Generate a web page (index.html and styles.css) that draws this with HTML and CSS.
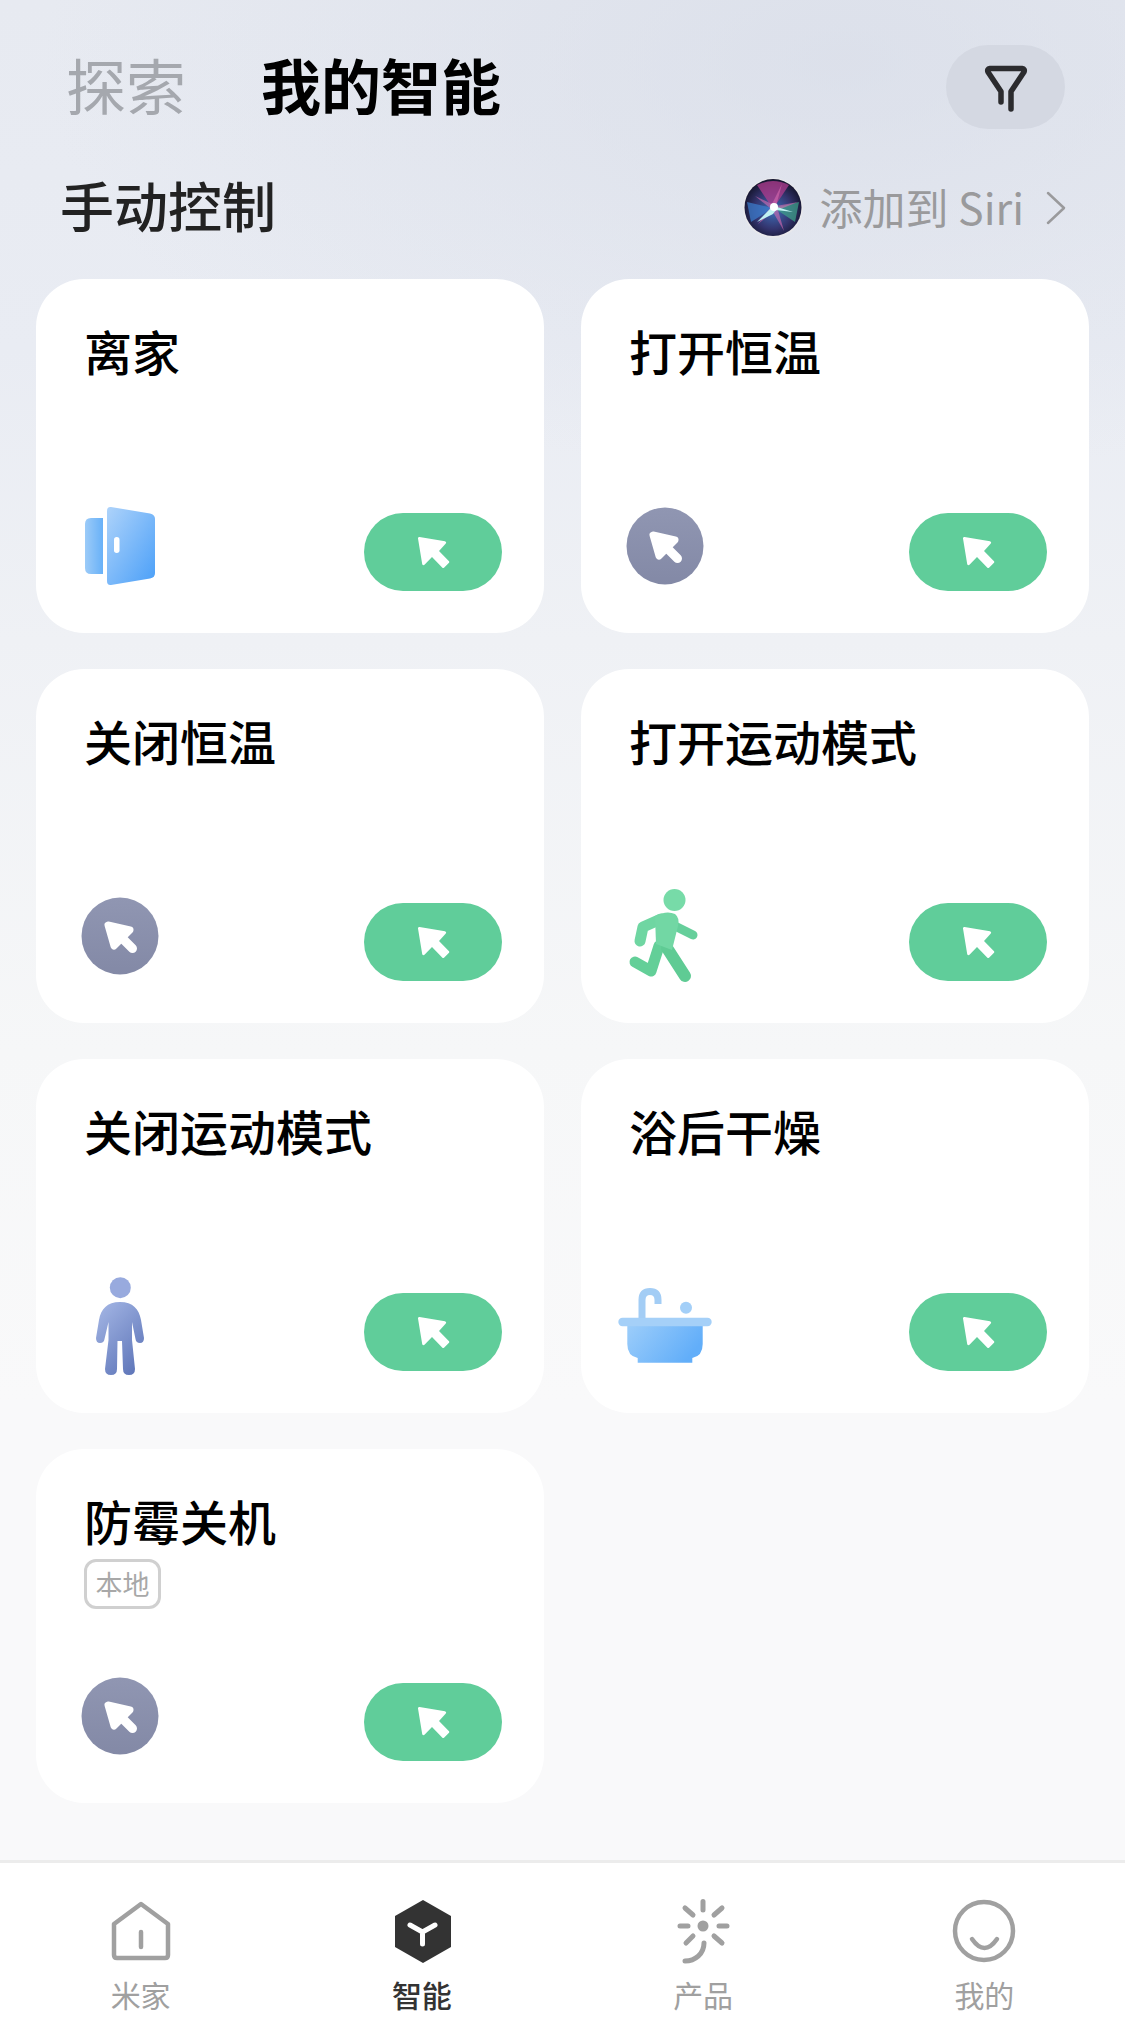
FILE: index.html
```html
<!DOCTYPE html>
<html lang="zh-CN">
<head>
    <meta charset="UTF-8">
    <meta name="viewport" content="width=device-width, initial-scale=1.0">
    <title>我的智能</title>
    <link rel="stylesheet" href="styles.css">
</head>
<body>
    <svg class="defs" width="0" height="0">
        <defs>
            <linearGradient id="blue" x1="0" y1="0" x2="1" y2="1">
                <stop offset="0" stop-color="#aed3fa"/>
                <stop offset="1" stop-color="#4a9ff8"/>
            </linearGradient>
            <linearGradient id="blueSide" x1="0" y1="0" x2="1" y2="0">
                <stop offset="0" stop-color="#9ccbf8"/>
                <stop offset="1" stop-color="#68b1f8"/>
            </linearGradient>
            <linearGradient id="tub" x1="0" y1="0" x2="1" y2="0.4">
                <stop offset="0" stop-color="#9ccdfa"/>
                <stop offset="1" stop-color="#62aef9"/>
            </linearGradient>
            <linearGradient id="man" x1="0" y1="0" x2="0.7" y2="1">
                <stop offset="0" stop-color="#a6b8e6"/>
                <stop offset="1" stop-color="#6279bb"/>
            </linearGradient>
            <linearGradient id="grey" x1="0" y1="0" x2="0" y2="1">
                <stop offset="0" stop-color="#9096b2"/>
                <stop offset="1" stop-color="#8389a6"/>
            </linearGradient>
            <radialGradient id="siriBg" cx="0.5" cy="0.55" r="0.55">
                <stop offset="0" stop-color="#3d6fb8"/>
                <stop offset="0.6" stop-color="#33346e"/>
                <stop offset="1" stop-color="#14142c"/>
            </radialGradient>
            <symbol id="cursor" viewBox="0 0 34 34">
                <path d="M2 3.500Q1.800 1.700 3.500 2L29 6.300Q31 7 29.800 8.400L23 16L33 26.300Q33.700 27 33 27.800L28 32.700Q27.200 33.400 26.400 32.700L16 22L8.500 29.800Q6.800 31 6.200 29Z" fill="#fff"/>
            </symbol>
            <symbol id="manual" viewBox="0 0 100 100">
                <circle cx="50" cy="50" r="38.500" fill="url(#grey)"/>
                <path d="M38 39L60 44L44 60Z" fill="#fff" stroke="#fff" stroke-width="7" stroke-linejoin="round"/>
                <path d="M50 50L62.500 62.500" stroke="#fff" stroke-width="9" stroke-linecap="round"/>
            </symbol>
        </defs>
    </svg>

    <div class="main">
        <div class="top">
            <div class="tabs">
                <span class="tab">探索</span>
                <span class="tab active">我的智能</span>
            </div>
            <div class="filter">
                <svg width="50" height="50" viewBox="0 0 50 50" fill="none" stroke="#2b2b2e" stroke-width="5.500" stroke-linecap="round" stroke-linejoin="round">
                    <path d="M20 40V29.500L7 10Q5.800 7 9 6.500H41Q44.200 7 43 10L30 29.500V47"/>
                </svg>
            </div>
        </div>

        <div class="section">
            <h2>手动控制</h2>
            <div class="siri">
                <svg width="60" height="60" viewBox="0 0 60 60">
                    <circle cx="30" cy="30" r="30" fill="#e9e9ec"/>
                    <circle cx="30" cy="29.500" r="28.500" fill="url(#siriBg)"/>
                    <path d="M30 31L14 7Q30 -1 46 7Z" fill="#b03c8e" opacity=".75"/>
                    <path d="M31 30L56 24L52 44Z" fill="#3fa58a" opacity=".7"/>
                    <path d="M30 30L4 24L8 44Z" fill="#3c7fd0" opacity=".7"/>
                    <path d="M29 26L39 6L33 28L55 24L35 32L41 53L30 34L15 46L27 30L12 18Z" fill="#d76bb0" opacity=".6"/>
                    <path d="M30 25L34 29L50 34L33 32L30 36L14 44L27 31Z" fill="#bff2f2"/>
                    <circle cx="31" cy="29" r="4" fill="#fff"/>
                </svg>
                <span>添加到 Siri</span>
                <svg class="chevron" width="22" height="34" viewBox="0 0 22 34" fill="none" stroke="#9a9a9c" stroke-width="2.500" stroke-linecap="round" stroke-linejoin="round">
                    <path d="M3 2L19 17L3 32"/>
                </svg>
            </div>
        </div>

        <div class="cards">
            <div class="card">
                <div class="card-title">离家</div>
                <div class="card-bottom">
                    <svg class="scene" viewBox="0 0 100 100">
                        <path d="M33 22V78H21Q15 78 15 72V28Q15 22 21 22Z" fill="url(#blueSide)"/>
                        <path d="M37 15Q37 10.500 41 11L80 17.500Q85 18.500 85 23V77Q85 81.500 80 82.500L41 89Q37 89.500 37 85Z" fill="url(#blue)"/>
                        <rect x="44" y="41" width="5.500" height="16" rx="2.700" fill="#fff"/>
                    </svg>
                    <button class="run"><svg width="34" height="34"><use href="#cursor"/></svg></button>
                </div>
            </div>
            <div class="card">
                <div class="card-title">打开恒温</div>
                <div class="card-bottom">
                    <svg class="scene" viewBox="0 0 100 100"><use href="#manual"/></svg>
                    <button class="run"><svg width="34" height="34"><use href="#cursor"/></svg></button>
                </div>
            </div>
            <div class="card">
                <div class="card-title">关闭恒温</div>
                <div class="card-bottom">
                    <svg class="scene" viewBox="0 0 100 100"><use href="#manual"/></svg>
                    <button class="run"><svg width="34" height="34"><use href="#cursor"/></svg></button>
                </div>
            </div>
            <div class="card">
                <div class="card-title">打开运动模式</div>
                <div class="card-bottom">
                    <svg class="scene" viewBox="0 0 100 100" fill="none" stroke-linecap="round" stroke-linejoin="round">
                        <circle cx="59.500" cy="14" r="11" fill="#77dba8"/>
                        <path d="M60 40L78 49" stroke="#66cf9b" stroke-width="9"/>
                        <path d="M44 60L36 85L20 76" stroke="#63cf98" stroke-width="11"/>
                        <path d="M52 62L70 90" stroke="#5fcb94" stroke-width="12"/>
                        <path d="M46 33L28 41L25 55" stroke="#6fd6a2" stroke-width="11"/>
                        <path d="M40 30Q52 24 60 28Q65 32 63 40L57 64L41 58Z" fill="#72d7a4"/>
                    </svg>
                    <button class="run"><svg width="34" height="34"><use href="#cursor"/></svg></button>
                </div>
            </div>
            <div class="card">
                <div class="card-title">关闭运动模式</div>
                <div class="card-bottom">
                    <svg class="scene" viewBox="0 0 100 100" fill="url(#man)">
                        <circle cx="50.300" cy="11.700" r="10.500" fill="#98aade"/>
                        <path d="M50 26C63 26 69 33 71 44L74 62Q74 67 70 67Q66 67 65.500 63L62 46V64L65 93Q65 99 59 99Q53 99 53 93L52 65H47.500L47 93Q47 99 41 99Q35 99 35 93L38.500 64V46L34.500 63Q34 67 30 67Q26 67 26 62L29 44C31 33 37 26 50 26Z"/>
                    </svg>
                    <button class="run"><svg width="34" height="34"><use href="#cursor"/></svg></button>
                </div>
            </div>
            <div class="card">
                <div class="card-title">浴后干燥</div>
                <div class="card-bottom">
                    <svg class="scene" viewBox="0 0 100 100" fill="none">
                        <path d="M27 42V24Q27 15.500 35 15.500Q43 15.500 43 24V28" stroke="#a3cdf5" stroke-width="7"/>
                        <circle cx="71" cy="31.700" r="6" fill="#a3cff8"/>
                        <path d="M12.300 50H87.700V68Q87.700 80 77.300 82V86.700H22.700V82Q12.300 80 12.300 68Z" fill="url(#tub)"/>
                        <rect x="3.300" y="41.700" width="93.400" height="8.500" rx="4.200" fill="#a5d0f8"/>
                    </svg>
                    <button class="run"><svg width="34" height="34"><use href="#cursor"/></svg></button>
                </div>
            </div>
            <div class="card">
                <div>
                    <div class="card-title">防霉关机</div>
                    <span class="tag">本地</span>
                </div>
                <div class="card-bottom">
                    <svg class="scene" viewBox="0 0 100 100"><use href="#manual"/></svg>
                    <button class="run"><svg width="34" height="34"><use href="#cursor"/></svg></button>
                </div>
            </div>
        </div>
    </div>

    <div class="tabbar">
        <div class="item">
            <svg width="66" height="66" viewBox="0 0 66 66" fill="none" stroke="#a0a0a0" stroke-width="4.500" stroke-linecap="round" stroke-linejoin="round">
                <path d="M33 6L60 26V57Q60 60 57 60H9Q6 60 6 57V26Z"/>
                <path d="M33 34V49"/>
            </svg>
            <span>米家</span>
        </div>
        <div class="item active">
            <svg width="66" height="66" viewBox="0 0 66 66" fill="none">
                <path d="M34 2L62 18V49L34 65L6 49V18Z" fill="#333"/>
                <path d="M21 27L33.500 34L46 27M33.500 34V46" stroke="#fff" stroke-width="5" stroke-linecap="round" stroke-linejoin="round"/>
            </svg>
            <span>智能</span>
        </div>
        <div class="item">
            <svg width="66" height="66" viewBox="0 0 66 66" fill="none" stroke="#a0a0a0" stroke-width="5" stroke-linecap="round">
                <circle cx="33" cy="28" r="5.500" fill="#a0a0a0" stroke="none"/>
                <path d="M33 3.500V12M10 28H18M49 28H57M15 10L23 17M44 17L52 10M16 45L23 38M44 38L52 45"/>
                <path d="M34 45C34 56 25 63 15 63"/>
            </svg>
            <span>产品</span>
        </div>
        <div class="item">
            <svg width="66" height="66" viewBox="0 0 66 66" fill="none" stroke="#a0a0a0" stroke-width="4.500" stroke-linecap="round">
                <circle cx="33" cy="33" r="29"/>
                <path d="M21 41Q33.500 59 46 41"/>
            </svg>
            <span>我的</span>
        </div>
    </div>
</body>
</html>
```

FILE: styles.css
```css
* {
    box-sizing: border-box;
}
html, body {
    margin: 0;
    padding: 0;
}
body {
    display: flex;
    flex-direction: column;
    width: 1125px;
    height: 2031px;
    overflow: hidden;
    background-color: #f9f9fa;
    font-family: "Noto Sans CJK SC", "Noto Sans", sans-serif;
}
.defs {
    display: block;
    width: 0;
    height: 0;
}

.main {
    flex: 1;
    background:
        radial-gradient(ellipse 800px 420px at 75% 60px, rgba(214, 219, 231, .65), rgba(214, 219, 231, 0)),
        linear-gradient(180deg, #e7eaf1 0, #e9ecf3 350px, #eff1f5 640px, #f6f7f8 1050px, #f9f9fa 1400px);
}

.top {
    display: flex;
    justify-content: space-between;
    align-items: center;
    height: 84px;
    margin-top: 45px;
    padding: 0 60px 0 66px;
}
.tabs {
    display: flex;
    align-items: center;
    gap: 75px;
    margin-bottom: 7px;
}
.tab {
    font-size: 60px;
    line-height: 84px;
    color: #a5a8ae;
}
.tab.active {
    font-weight: 700;
    color: #000;
}
.filter {
    display: flex;
    justify-content: center;
    align-items: center;
    width: 119px;
    height: 84px;
    border-radius: 42px;
    background-color: #d4d8e2;
}

.section {
    display: flex;
    justify-content: space-between;
    align-items: center;
    height: 60px;
    margin-top: 49px;
    padding: 0 58px 0 60px;
}
.section h2 {
    margin: 0 0 7px;
    font-size: 54px;
    font-weight: 500;
    line-height: 60px;
    color: #222;
}
.siri {
    display: flex;
    align-items: center;
    font-size: 43px;
    color: #9a9a9c;
}
.siri span {
    margin: 0 0 5px 16px;
}
.chevron {
    margin-left: 21px;
}

.cards {
    display: grid;
    grid-template-columns: 508px 508px;
    grid-auto-rows: 354px;
    gap: 36px 37px;
    margin-top: 41px;
    padding: 0 36px;
}
.card {
    display: flex;
    flex-direction: column;
    justify-content: space-between;
    padding: 47px 42px 37px 34px;
    border-radius: 48px;
    background-color: #fff;
}
.card-title {
    margin-left: 14px;
    font-size: 48px;
    font-weight: 500;
    line-height: 48px;
    color: #000;
}
.card-bottom {
    display: flex;
    justify-content: space-between;
    align-items: flex-end;
}
.scene {
    display: block;
    width: 100px;
    height: 100px;
}
.run {
    display: flex;
    justify-content: center;
    align-items: center;
    width: 138px;
    height: 78px;
    margin-bottom: 5px;
    padding: 0;
    border: 0;
    border-radius: 39px;
    background-color: #60cd9a;
}
.tag {
    display: inline-block;
    width: 77px;
    height: 50px;
    margin: 15px 0 0 14px;
    border: 3px solid #d0d0d0;
    border-radius: 12px;
    font-size: 27px;
    line-height: 44px;
    text-align: center;
    color: #a8a8a8;
}

.tabbar {
    display: grid;
    grid-template-columns: repeat(4, 1fr);
    height: 171px;
    padding-top: 35px;
    border-top: 3px solid #ececec;
    background-color: #fff;
}
.item {
    display: flex;
    flex-direction: column;
    align-items: center;
    font-size: 30px;
    line-height: 36px;
    color: #a0a0a0;
}
.item span {
    margin-top: 12px;
}
.item.active {
    font-weight: 500;
    color: #333;
}
```
